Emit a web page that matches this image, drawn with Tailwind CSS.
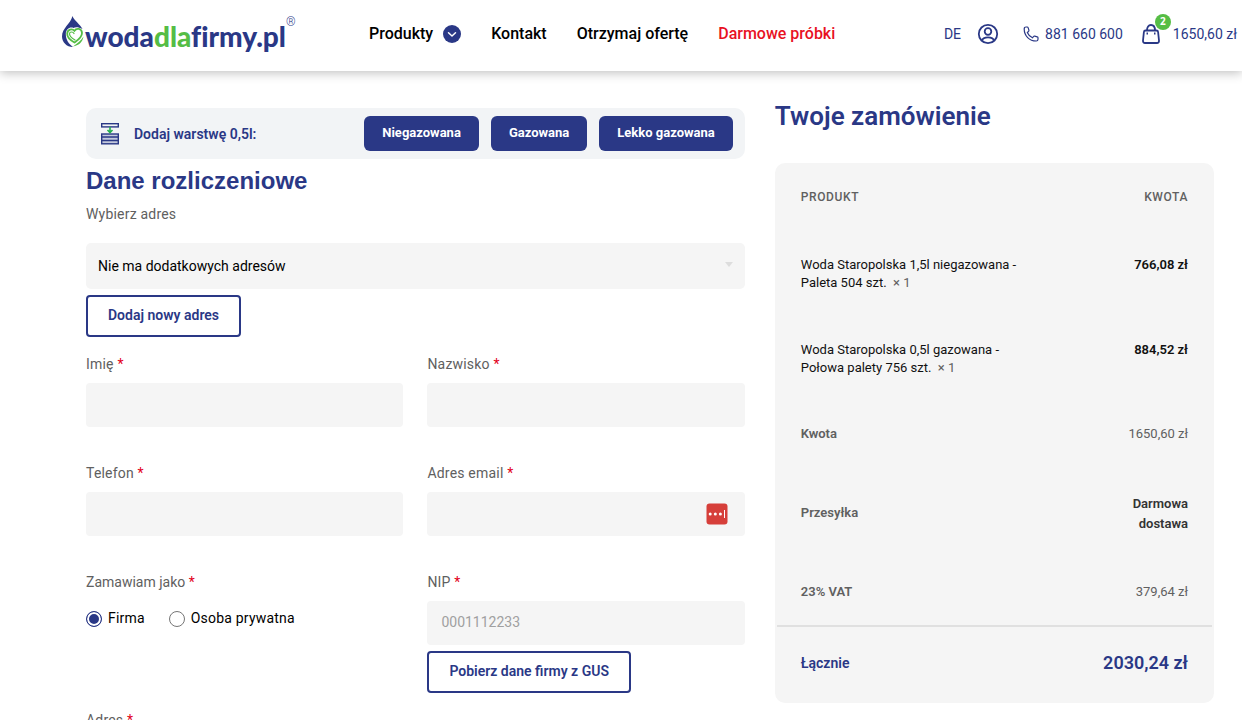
<!DOCTYPE html>
<html lang="pl">

<head>
    <meta charset="UTF-8">
    <title>Zamówienie - wodadlafirmy.pl</title>
    <meta name="viewport" content="width=device-width, initial-scale=1">
    <script src="https://cdn.jsdelivr.net/npm/@tailwindcss/browser@4"></script>
</head>

<body class="bg-white font-['Roboto',sans-serif] text-sm text-[#606060] overflow-x-hidden">

    <!-- Header -->
    <header class="flex items-center h-[71px] pl-[61px] pr-[5px] pb-1 bg-white shadow-[0_2px_10px_rgba(0,0,0,0.25)]">
        <a href="#" class="flex items-start shrink-0 w-[232px] pt-1" aria-label="wodadlafirmy.pl">
            <svg class="w-6 h-8 shrink-0" viewBox="0 0 24 32" fill="none">
                <path d="M11.500 0C13 4.500 19 8 21.500 13C17 10.500 14 11 12.500 12C9 10.500 4.800 13 4.800 18C4.800 24 8 28 12 31C5.500 31 1 26 1 20.500C1 12 9.500 8 11.500 0Z" fill="#2a3886" />
                <path d="M13.500 26.500C9 24 6 21 6.200 17.500C6.400 13.500 11 12 13.500 14.800C15.500 11.500 20.800 12.500 21 17C21 21.500 17 24 13.500 26.500Z" stroke="#55bd45" stroke-width="1.800" />
                <path d="M14 24C10.500 22 8.300 20.200 8.500 17.500C8.800 15.500 12 15.500 13 17.500" stroke="#55bd45" stroke-width="1.200" stroke-linecap="round" />
                <path d="M12 30.500C17.500 29.500 21.500 26.500 22.500 20.500C20 25 16 27.500 12 30.500Z" fill="#55bd45" />
            </svg>
            <span class="font-['Lato',sans-serif] text-[28px] leading-10 font-black text-[#2a3886] [font-variant-ligatures:none]">woda<span class="text-[#55bd45]">dla</span>firmy.pl</span>
            <span class="text-xs leading-3 font-light text-[#2a3886]">®</span>
        </a>

        <nav class="flex items-center gap-[30px] ml-[76px] text-base font-medium text-black whitespace-nowrap">
            <a href="#" class="flex items-center gap-[10px]">
                Produkty
                <svg class="size-[18px]" viewBox="0 0 18 18" fill="none">
                    <circle cx="9" cy="9" r="9" fill="#2a3886" />
                    <path d="M5.500 7.800L9 11L12.500 7.800" stroke="#fff" stroke-width="1.500" stroke-linecap="round" stroke-linejoin="round" />
                </svg>
            </a>
            <a href="#">Kontakt</a>
            <a href="#">Otrzymaj ofertę</a>
            <a href="#" class="text-[#e8111f]">Darmowe próbki</a>
        </nav>

        <div class="flex items-center ml-auto text-[#2a3886] whitespace-nowrap">
            <a href="#" class="mr-4">DE</a>
            <a href="#" class="mr-6" aria-label="Moje konto">
                <svg class="size-[22px]" viewBox="0 0 22 22" fill="none" stroke="#2a3886" stroke-width="1.800">
                    <circle cx="11" cy="11" r="9.200" />
                    <circle cx="11" cy="8.500" r="3.300" />
                    <path d="M5 17.500C5.600 14.900 7.800 14.300 11 14.300C14.200 14.300 16.400 14.900 17 17.500" />
                </svg>
            </a>
            <a href="tel:881660600" class="flex items-center gap-[6px] mr-[19px]">
                <svg class="size-4" viewBox="0 0 16 16" fill="none" stroke="#2a3886" stroke-width="1.200" stroke-linejoin="round">
                    <path d="M1.200 3C1.200 1.700 2 1 3 1H4.200C4.800 1 5 1.300 5.200 1.900L5.900 4.200C6 4.800 5.900 5.100 5.500 5.500L4.300 6.500C5.200 8.700 7 10.700 9.500 11.800L10.500 10.500C10.800 10.100 11.200 10 11.700 10.100L14.200 10.800C14.800 11 15 11.300 15 11.800V13.200C15 14.300 14.300 15 13.200 15C6.400 15 1.200 9.800 1.200 3Z" />
                </svg>
                881 660 600
            </a>
            <a href="#" class="relative flex items-center gap-[13px]">
                <svg class="w-[18px] h-5" viewBox="0 0 18 20" fill="none" stroke="#2a3886" stroke-width="1.800">
                    <path d="M3.500 6.500H14.500C15.500 6.500 16 7 16.100 8L17 16.500C17.100 18.200 16.300 19 15 19H3C1.700 19 0.900 18.200 1 16.500L1.900 8C2 7 2.500 6.500 3.500 6.500Z" />
                    <path d="M5 6.500C5 3 6.500 1 9 1C11.500 1 13 3 13 6.500" />
                    <path d="M4.500 9.500H6M12 9.500H13.500" />
                </svg>
                <span class="absolute -top-[10px] left-[13px] flex items-center justify-center size-4 rounded-full bg-[#55bd45] font-['Open_Sans',sans-serif] text-[10px] font-bold text-white">2</span>
                1650,60 zł
            </a>
        </div>
    </header>

    <main class="grid grid-cols-[3fr_2fr] gap-[30px] pl-[86px] pr-7 pt-[37px]">

        <!-- Billing form -->
        <form>
            <div class="flex items-center h-[51px] pl-[15px] pr-3 rounded-[10px] bg-[#f2f4f6]">
                <svg class="w-[18px] h-[22px]" viewBox="0 0 18 22" fill="none" stroke="#2a3886" stroke-width="1.400">
                    <rect x="0.700" y="0.700" width="16.600" height="3.200" />
                    <rect x="0.700" y="11" width="16.600" height="9.800" fill="#c3c8dc" />
                    <path d="M1 14H17M1 17.500H17" />
                    <path d="M9 4V9M6.500 7L9 9.500L11.500 7" stroke="#22b04d" stroke-width="1.600" />
                </svg>
                <span class="ml-[15px] mr-auto font-semibold text-[#2a3886]">Dodaj warstwę 0,5l:</span>
                <div class="flex gap-3 text-[13px] font-bold text-white">
                    <button type="button" class="h-[35px] px-[18px] rounded-md bg-[#2a3886]">Niegazowana</button>
                    <button type="button" class="h-[35px] px-[18px] rounded-md bg-[#2a3886]">Gazowana</button>
                    <button type="button" class="h-[35px] px-[18px] rounded-md bg-[#2a3886]">Lekko gazowana</button>
                </div>
            </div>

            <h2 class="mt-1 font-['Liberation_Sans',sans-serif] text-2xl leading-9 font-bold text-[#2a3886]">Dane rozliczeniowe</h2>

            <label for="address-select" class="block mt-[5px] leading-5 tracking-[0.2px]">Wybierz adres</label>
            <div class="relative mt-[19px]">
                <select id="address-select" class="block w-full h-[46px] pl-3 rounded-[5px] bg-[#f5f5f5] text-black appearance-none">
                    <option>Nie ma dodatkowych adresów</option>
                </select>
                <svg class="absolute top-[19px] right-3 w-2 h-[5px] pointer-events-none" viewBox="0 0 8 5">
                    <path d="M0 0H8L4 5Z" fill="#dddddd" />
                </svg>
            </div>
            <button type="button" class="mt-[6px] h-[42px] px-5 pb-[2px] border-2 border-[#2a3886] rounded font-semibold text-[#2a3886]">Dodaj nowy adres</button>

            <div class="grid grid-cols-2 gap-x-6 mt-[17px]">
                <div class="h-[109px]">
                    <label for="first-name" class="block leading-5 tracking-[0.2px]">Imię <span class="text-[#e2001a]">*</span></label>
                    <input id="first-name" type="text" class="block w-full h-11 mt-[9px] px-[14px] rounded bg-[#f5f5f5]">
                </div>
                <div class="h-[109px]">
                    <label for="last-name" class="block leading-5 tracking-[0.2px]">Nazwisko <span class="text-[#e2001a]">*</span></label>
                    <input id="last-name" type="text" class="block w-full h-11 mt-[9px] px-[14px] rounded bg-[#f5f5f5]">
                </div>
                <div class="h-[109px]">
                    <label for="phone" class="block leading-5 tracking-[0.2px]">Telefon <span class="text-[#e2001a]">*</span></label>
                    <input id="phone" type="tel" class="block w-full h-11 mt-[9px] px-[14px] rounded bg-[#f5f5f5]">
                </div>
                <div class="h-[109px]">
                    <label for="email" class="block leading-5 tracking-[0.2px]">Adres email <span class="text-[#e2001a]">*</span></label>
                    <div class="relative mt-[9px]">
                        <input id="email" type="email" class="block w-full h-11 px-[14px] rounded bg-[#f5f5f5]">
                        <svg class="absolute top-[11px] right-[17px] size-[22px]" viewBox="0 0 22 22">
                            <rect x="0.500" y="0.500" width="21" height="21" rx="3" fill="#d63f3a" />
                            <circle cx="4.200" cy="11" r="1.500" fill="#fff" />
                            <circle cx="9.300" cy="11" r="1.500" fill="#fff" />
                            <circle cx="14.400" cy="11" r="1.500" fill="#fff" />
                            <rect x="18" y="7" width="1" height="8" fill="#fff" />
                        </svg>
                    </div>
                </div>
                <fieldset>
                    <legend class="leading-5">Zamawiam jako <span class="text-[#e2001a]">*</span></legend>
                    <div class="flex gap-6 mt-4 text-black tracking-[0.2px]">
                        <label class="flex items-center gap-[6px]">
                            <input type="radio" name="customer" checked class="appearance-none size-4 mt-[2px] rounded-full border border-[#2a3886] bg-[#2a3886] shadow-[inset_0_0_0_2px_#ffffff]">
                            Firma
                        </label>
                        <label class="flex items-center gap-[6px]">
                            <input type="radio" name="customer" class="appearance-none size-4 mt-[2px] rounded-full border border-[#767676] bg-white">
                            Osoba prywatna
                        </label>
                    </div>
                </fieldset>
                <div>
                    <label for="nip" class="block leading-5 tracking-[0.2px]">NIP <span class="text-[#e2001a]">*</span></label>
                    <input id="nip" type="text" placeholder="0001112233" class="block w-full h-11 mt-[9px] px-[14px] pb-[2px] rounded bg-[#f5f5f5] placeholder:text-[#a0a0a0]">
                    <button type="button" class="mt-[6px] h-[42px] px-5 pb-[2px] border-2 border-[#2a3886] rounded font-semibold text-[#2a3886]">Pobierz dane firmy z GUS</button>
                </div>
            </div>

            <label for="street" class="block mt-[17px] leading-5 tracking-[0.2px]">Adres <span class="text-[#e2001a]">*</span></label>
            <input id="street" type="text" class="block w-full h-11 mt-[9px] px-[14px] rounded bg-[#f5f5f5]">
        </form>

        <!-- Order summary -->
        <section>
            <h2 class="-mt-2 text-[26px] leading-8 font-semibold text-[#2a3886]">Twoje zamówienie</h2>
            <div class="mt-[31px] px-[2px] rounded-[10px] bg-[#f5f5f5]">
                <table class="w-full text-[13px]">
                    <thead>
                        <tr class="h-[68px] text-xs tracking-wider">
                            <th class="pl-6 text-left font-medium">PRODUKT</th>
                            <th class="pr-6 text-right font-medium">KWOTA</th>
                        </tr>
                    </thead>
                    <tbody>
                        <tr class="h-[85px]">
                            <td class="pl-6 leading-[18px] text-[#111111]">Woda Staropolska 1,5l niegazowana -<br>Paleta 504 szt.&nbsp; <span class="text-[#606060]">× 1</span></td>
                            <td class="pr-6 pt-[25px] align-top text-right leading-[18px] font-semibold text-[#111111]">766,08 zł</td>
                        </tr>
                        <tr class="h-[85px]">
                            <td class="pl-6 leading-[18px] text-[#111111]">Woda Staropolska 0,5l gazowana -<br>Połowa palety 756 szt.&nbsp; <span class="text-[#606060]">× 1</span></td>
                            <td class="pr-6 pt-[25px] align-top text-right leading-[18px] font-semibold text-[#111111]">884,52 zł</td>
                        </tr>
                        <tr class="h-[67px]">
                            <th class="pl-6 text-left font-semibold">Kwota</th>
                            <td class="pr-6 text-right">1650,60 zł</td>
                        </tr>
                        <tr class="h-[91px]">
                            <th class="pl-6 text-left font-semibold">Przesyłka</th>
                            <td class="pr-6 text-right leading-5 font-semibold text-[#333333]">Darmowa<br>dostawa</td>
                        </tr>
                        <tr class="h-[67px]">
                            <th class="pl-6 text-left font-semibold">23% VAT</th>
                            <td class="pr-6 text-right">379,64 zł</td>
                        </tr>
                        <tr class="h-[77px] border-t-2 border-[#e0e0e0] text-[#2a3886]">
                            <th class="pl-6 pb-1 text-left text-sm font-semibold">Łącznie</th>
                            <td class="pr-6 pb-1 text-right text-lg font-semibold">2030,24 zł</td>
                        </tr>
                    </tbody>
                </table>
            </div>
        </section>
    </main>

</body>

</html>
